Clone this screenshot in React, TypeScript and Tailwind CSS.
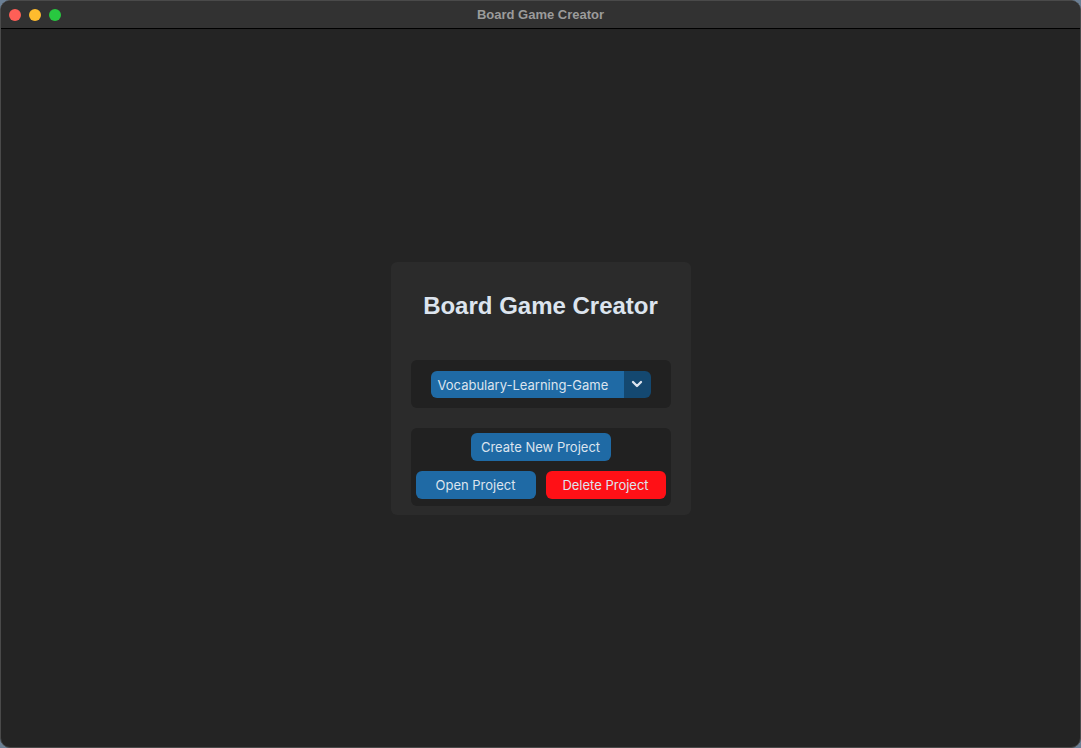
import { ChevronDown } from 'lucide-react';

function TrafficLights() {
  return (
    <div className="flex items-center gap-[8px] pl-[8px]">
      <span className="w-[12px] h-[12px] rounded-full bg-[#fe5f57]" />
      <span className="w-[12px] h-[12px] rounded-full bg-[#febc2e]" />
      <span className="w-[12px] h-[12px] rounded-full bg-[#28c840]" />
    </div>
  );
}

export default function App() {
  const ui = { fontFamily: 'Inter, "Noto Sans", sans-serif' };
  return (
    <div className="w-[1081px] h-[748px] bg-[#6b7f94]">
      <div className="w-full h-full flex flex-col rounded-[10px] overflow-hidden border border-[#4a4a4a] bg-[#242424]">
        <div className="relative h-[28px] shrink-0 flex items-center bg-[#323232] border-b border-black">
          <TrafficLights />
          <div
            className="absolute inset-0 flex items-center justify-center text-[13px] font-bold text-[#9b9b9b]"
            style={{ fontFamily: '"Liberation Sans", Arial, sans-serif' }}
          >
            Board Game Creator
          </div>
        </div>

        <div className="flex-1 flex items-center justify-center">
          <div className="w-[300px] rounded-[6px] bg-[#2b2b2b] px-[20px] pt-[30px] pb-[9px]">
            <h1
              className="text-center text-[24px] leading-[28px] font-bold text-[#dce4ee]"
              style={{ fontFamily: '"Liberation Sans", Arial, sans-serif' }}
            >
              Board Game Creator
            </h1>

            <div className="mt-[40px] rounded-[6px] bg-[#212121] px-[20px] pt-[11px] pb-[10px]">
              <div className="flex h-[27px] rounded-[6px] overflow-hidden" style={ui}>
                <div className="flex-1 flex items-center pl-[7px] pt-[3px] bg-[#1f6aa5] text-[13px] text-[#dce4ee]">
                  Vocabulary-Learning-Game
                </div>
                <div className="w-[27px] flex items-center justify-center bg-[#144870] text-[#dce4ee]">
                  <ChevronDown size={16} strokeWidth={3.5} />
                </div>
              </div>
            </div>

            <div
              className="mt-[20px] rounded-[6px] bg-[#212121] px-[5px] pt-[5px] pb-[7px] flex flex-col items-center gap-[10px] text-[13px] text-[#dce4ee]"
              style={ui}
            >
              <button className="w-[140px] h-[28px] pt-[2px] rounded-[6px] bg-[#1f6aa5]">Create New Project</button>
              <div className="flex w-full justify-between">
                <button className="w-[120px] h-[28px] pt-[2px] rounded-[6px] bg-[#1f6aa5]">Open Project</button>
                <button className="w-[120px] h-[28px] pt-[2px] rounded-[6px] bg-[#ff1016]">Delete Project</button>
              </div>
            </div>
          </div>
        </div>
      </div>
    </div>
  );
}
